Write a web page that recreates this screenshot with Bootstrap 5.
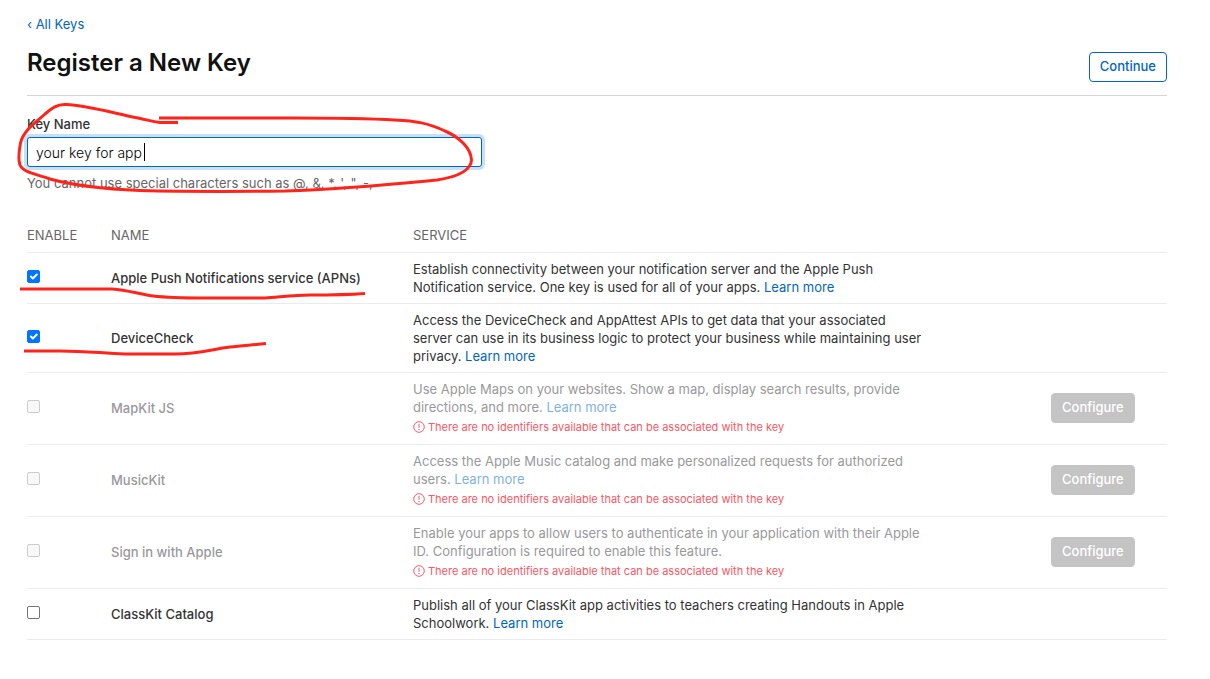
<!DOCTYPE html>
<html lang="en">
<head>
<meta charset="utf-8">
<meta name="viewport" content="width=device-width, initial-scale=1">
<title>Register a New Key</title>
<link rel="stylesheet" href="https://cdn.jsdelivr.net/npm/bootstrap@5.3.0/dist/css/bootstrap.min.css">
<style>
  body { font: 400 13px/18px Inter, "Liberation Sans", sans-serif; color: #333; background: #fff; }
  a { color: #0066bf; text-decoration: none; }
  a:hover { text-decoration: underline; }
  .page { padding: 15px 43px 24px 27px; }
  .page-head { margin-top: 16px; padding-bottom: 13px; border-bottom: 1px solid #d6d6d6; }
  .page-title { font-size: 24px; line-height: 28px; font-weight: 600; color: #111; }
  .btn-key { font-size: 13px; line-height: 18px; font-weight: 500; padding: 4px 10px 6px; border-radius: 4px; }
  .btn-continue { margin-top: 3px; color: #0066bf; border-color: #0066bf; background: #fff; }
  .btn-configure, .btn-configure:disabled { display: block; color: #fff; background: #c4c4c4; border-color: #c4c4c4; opacity: 1; }
  .key-field { max-width: 455px; padding-top: 19px; }
  .key-field label { font-weight: 500; margin-bottom: 4px; }
  .key-input, .key-input:focus { height: 30px; padding: 0 8px; font-size: 14px; font-weight: 300; color: #000; border: 1px solid #0066bf; border-radius: 3px; box-shadow: 0 0 0 3px #c9dff2; }
  .caret { left: 117px; top: 6px; width: 1px; height: 18px; background: #000; }
  .hint { margin-top: 7px; color: #666; }
  .ink { position: absolute; overflow: visible; pointer-events: none; z-index: 2; fill: none; stroke: #ff231a; stroke-width: 3; }
  .ink-loop { left: -27px; top: 0; }
  .ink-line { left: -27px; top: 0; }
  .key-table { margin: 26px 0 0; --bs-table-bg: transparent; --bs-table-color: #333; color: #333; }
  .key-table > :not(caption) > * > * { padding: 7px 0; border-bottom: 1px solid #ebebeb; vertical-align: middle; }
  .key-table > thead > tr > th { padding: 8px 0; font-weight: 400; color: #666; }
  .key-table > tbody > .is-off > .mid { padding-bottom: 8px; }
  .col-enable { width: 84px; }
  .col-name { width: 302px; }
  .col-action { width: 116px; }
  .key-table .service-text { max-width: 511px; }
  .key-name { font-weight: 500; }
  .tick { display: block; width: 13px; height: 13px; margin: 0 0 4px; border: 1px solid #767676; font-size: 13px; background-size: 13px; }
  .tick.form-check-input { border-radius: 2px; }
  .tick.form-check-input:checked { background-color: #0075ff; border-color: #0075ff; }
  .tick.form-check-input:disabled { opacity: 1; background-color: #f8f8f8; border-color: #ccc; }
  .is-off, .is-off .key-name { color: #999; }
  .is-off a { color: #7fb2df; }
  .warn { margin-top: 2px; margin-bottom: 1px; gap: 3px; font-size: 11px; color: #fa5664; }
</style>
</head>
<body>
<main class="page">
  <a href="#">‹ All Keys</a>
  <header class="page-head d-flex justify-content-between align-items-start">
    <h1 class="page-title mb-0">Register a New Key</h1>
    <button type="button" class="btn btn-key btn-continue">Continue</button>
  </header>

  <form class="key-field position-relative">
    <label class="d-block" for="keyName">Key Name</label>
    <div class="position-relative">
      <input class="form-control key-input" id="keyName" type="text" value="your key for app" aria-describedby="keyHint">
      <span class="caret position-absolute"></span>
    </div>
    <div class="hint" id="keyHint">You cannot use special characters such as @, &amp;, *, ', ", -,</div>
    <svg class="ink ink-loop" width="500" height="104" viewBox="0 96 500 104" aria-hidden="true">
      <path d="M178 122.500H160C152 121.500 148 120 138 118C115 113.500 88 105.500 66 104.500C57 104 52 108 45 114C35 123 23 131 20.500 143C19 151 18 160 20 165C23 172 35 174 50 179C75 186 105 189 140 190.500C180 191.500 240 191.500 285 191C345 189 395 184 437 180C456 177 471 171 471.500 160C471 148 459 137 445 131C428 123 416 121 395 120C360 118 330 118 290 118H159"/>
    </svg>
  </form>

  <table class="table key-table">
    <thead>
      <tr>
        <th class="col-enable" scope="col">ENABLE</th>
        <th class="col-name" scope="col">NAME</th>
        <th scope="col">SERVICE</th>
        <th class="col-action" aria-label="Action"></th>
      </tr>
    </thead>
    <tbody>
      <tr>
        <td class="position-relative"><input class="form-check-input tick" type="checkbox" id="apns" checked>
          <svg class="ink ink-line" width="380" height="50" viewBox="0 0 380 50" aria-hidden="true"><path d="M20 36H112C128 37 138 41 153 43C170 45 185 45 205 45H265C280 44 295 42 310 42C330 42 345 42 365 40.500"/></svg></td>
        <td><label class="key-name" for="apns">Apple Push Notifications service (APNs)</label></td>
        <td><div class="service-text">Establish connectivity between your notification server and the Apple Push Notification service. One key is used for all of your apps. <a href="#">Learn more</a></div></td>
        <td></td>
      </tr>
      <tr>
        <td class="position-relative"><input class="form-check-input tick" type="checkbox" id="devicecheck" checked>
          <svg class="ink ink-line" width="380" height="60" viewBox="0 0 380 60" aria-hidden="true"><path d="M24 47H60C85 47 100 49 125 50H175C200 50 212 45 230 43C242 41.500 253 41 266 39.500"/></svg></td>
        <td><label class="key-name" for="devicecheck">DeviceCheck</label></td>
        <td><div class="service-text">Access the DeviceCheck and AppAttest APIs to get data that your associated server can use in its business logic to protect your business while maintaining user privacy. <a href="#">Learn more</a></div></td>
        <td></td>
      </tr>
      <tr class="is-off">
        <td><input class="form-check-input tick" type="checkbox" id="mapkit" disabled></td>
        <td class="mid"><label class="key-name" for="mapkit">MapKit JS</label></td>
        <td><div class="service-text">Use Apple Maps on your websites. Show a map, display search results, provide directions, and more. <a href="#">Learn more</a></div>
          <div class="warn d-flex align-items-center"><svg width="12" height="12" viewBox="0 0 12 12" fill="none" stroke="currentColor" aria-hidden="true"><circle cx="6" cy="6" r="5.300"/><path d="M6 3v3.800M6 7.900v1.200"/></svg>There are no identifiers available that can be associated with the key</div></td>
        <td class="mid"><button type="button" class="btn btn-key btn-configure" disabled>Configure</button></td>
      </tr>
      <tr class="is-off">
        <td><input class="form-check-input tick" type="checkbox" id="musickit" disabled></td>
        <td class="mid"><label class="key-name" for="musickit">MusicKit</label></td>
        <td><div class="service-text">Access the Apple Music catalog and make personalized requests for authorized users. <a href="#">Learn more</a></div>
          <div class="warn d-flex align-items-center"><svg width="12" height="12" viewBox="0 0 12 12" fill="none" stroke="currentColor" aria-hidden="true"><circle cx="6" cy="6" r="5.300"/><path d="M6 3v3.800M6 7.900v1.200"/></svg>There are no identifiers available that can be associated with the key</div></td>
        <td class="mid"><button type="button" class="btn btn-key btn-configure" disabled>Configure</button></td>
      </tr>
      <tr class="is-off">
        <td><input class="form-check-input tick" type="checkbox" id="signin" disabled></td>
        <td class="mid"><label class="key-name" for="signin">Sign in with Apple</label></td>
        <td><div class="service-text">Enable your apps to allow users to authenticate in your application with their Apple ID. Configuration is required to enable this feature.</div>
          <div class="warn d-flex align-items-center"><svg width="12" height="12" viewBox="0 0 12 12" fill="none" stroke="currentColor" aria-hidden="true"><circle cx="6" cy="6" r="5.300"/><path d="M6 3v3.800M6 7.900v1.200"/></svg>There are no identifiers available that can be associated with the key</div></td>
        <td class="mid"><button type="button" class="btn btn-key btn-configure" disabled>Configure</button></td>
      </tr>
      <tr>
        <td><input class="form-check-input tick" type="checkbox" id="classkit"></td>
        <td><label class="key-name" for="classkit">ClassKit Catalog</label></td>
        <td><div class="service-text">Publish all of your ClassKit app activities to teachers creating Handouts in Apple Schoolwork. <a href="#">Learn more</a></div></td>
        <td></td>
      </tr>
    </tbody>
  </table>
</main>
<script src="https://cdn.jsdelivr.net/npm/bootstrap@5.3.0/dist/js/bootstrap.bundle.min.js"></script>
</body>
</html>
